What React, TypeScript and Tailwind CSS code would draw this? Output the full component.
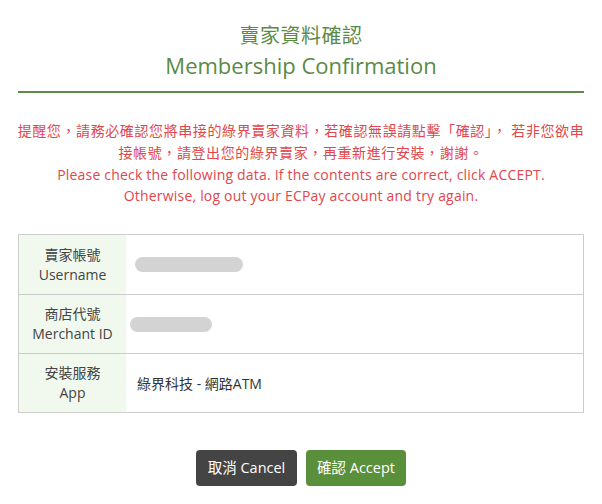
export default function App() {
  const font = { fontFamily: '"Open Sans", "Noto Sans CJK TC", sans-serif' };
  const rows = [
    { zh: "賣家帳號", en: "Username", value: <div className="h-[15px] w-[108px] rounded-full bg-[#d3d3d3] ml-[7px]" /> },
    { zh: "商店代號", en: "Merchant ID", value: <div className="h-[15px] w-[82px] rounded-full bg-[#d3d3d3] ml-[2px]" /> },
    { zh: "安裝服務", en: "App", value: <span className="text-[14px] text-[#333] ml-[9px]">綠界科技 - 網路ATM</span> },
  ];
  return (
    <div className="w-[602px] h-[504px] bg-white flex flex-col items-center" style={font}>
      <div className="w-[566px] flex flex-col items-center pt-[22px] pb-[11px] border-b-2 border-[#5e8c48]">
        <div className="text-[20px] leading-[28px] text-[#5b8a45] tracking-[0.5px]">賣家資料確認</div>
        <div className="text-[22px] leading-[30px] text-[#5b8a45]">Membership Confirmation</div>
      </div>
      <div className="w-[600px] mt-[27px] text-center text-[14px] leading-[22px] text-[#e0474c]">
        <div className="tracking-[0.6px]">提醒您，請務必確認您將串接的綠界賣家資料，若確認無誤請點擊「確認」， 若非您欲串</div>
        <div className="tracking-[0.6px]">接帳號，請登出您的綠界賣家，再重新進行安裝，謝謝。</div>
        <div className="leading-[21px] tracking-[0.2px]">Please check the following data. If the contents are correct, click ACCEPT.</div>
        <div className="leading-[21px] tracking-[0.2px]">Otherwise, log out your ECPay account and try again.</div>
      </div>
      <div className="w-[566px] mt-[28px] border border-[#cccccc] flex flex-col">
        {rows.map((r, i) => (
          <div key={i} className={`flex h-[59px] ${i > 0 ? "border-t border-[#cccccc]" : ""}`}>
            <div className="w-[107px] bg-[#f1f9ef] flex flex-col items-center justify-center text-[14px] leading-[20px] text-[#444]">
              <div>{r.zh}</div>
              <div>{r.en}</div>
            </div>
            <div className="flex-1 flex items-center pl-[2px]">{r.value}</div>
          </div>
        ))}
      </div>
      <div className="flex gap-[9px] mt-[37px]">
        <button className="h-[36px] w-[101px] rounded-[4px] bg-[#444444] text-white text-[14.5px]">取消 Cancel</button>
        <button className="h-[36px] w-[100px] rounded-[4px] bg-[#5a8f3c] text-white text-[14.5px]">確認 Accept</button>
      </div>
    </div>
  );
}
